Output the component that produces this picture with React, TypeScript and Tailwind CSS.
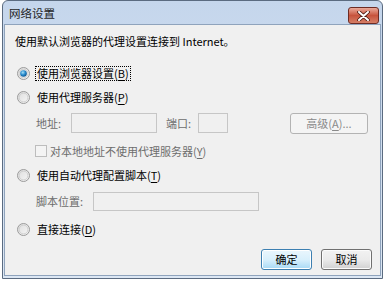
import React from "react"

const font = { fontFamily: '"Noto Sans CJK SC", "Noto Sans", sans-serif' }

function Radio({ checked }: { checked?: boolean }) {
  return (
    <svg width="13" height="13" viewBox="0 0 13 13" className="shrink-0">
      <defs>
        <linearGradient id="rb" x1="0" y1="0" x2="1" y2="1">
          <stop offset="0" stopColor="#dcdcdc" />
          <stop offset="1" stopColor="#f8f8f8" />
        </linearGradient>
        <radialGradient id="rd" cx="0.4" cy="0.35" r="0.7">
          <stop offset="0" stopColor="#a9e0f7" />
          <stop offset="0.5" stopColor="#2b8ecf" />
          <stop offset="1" stopColor="#0a4f8a" />
        </radialGradient>
      </defs>
      <circle cx="6.5" cy="6.5" r="6" fill="url(#rb)" stroke="#9a9a9a" strokeWidth="1" />
      <circle cx="6.5" cy="6.5" r="4.4" fill="none" stroke="#c8c8c8" strokeWidth="0.8" />
      {checked && <circle cx="6.5" cy="6.5" r="3.3" fill="url(#rd)" />}
    </svg>
  )
}

function Key({ k }: { k: string }) {
  return (
    <span>
      (<u className="underline-offset-2">{k}</u>)
    </span>
  )
}

export default function App() {
  return (
    <div className="w-[386px] h-[282px] bg-white relative overflow-hidden text-[11px] text-black" style={font}>
      <div className="ml-[2px] w-[381px] h-[279px] rounded-t-[6px] border border-[#5b6b80] bg-gradient-to-b from-[#c5d6ec] to-[#dce7f4] flex flex-col">
        {/* title bar */}
        <div className="h-[23px] flex items-center pl-[6px] pr-[3px] shrink-0">
          <span className="text-[11.5px] text-[#1e1e1e] mt-[2px]">网络设置</span>
          <div className="ml-auto mt-[6px] w-[31px] h-[17px] rounded-[3px] border border-[#6d2b24] bg-gradient-to-b from-[#e9a99a] via-[#c7533d] to-[#d57e66] flex items-center justify-center">
            <svg width="13" height="10" viewBox="0 0 13 10">
              <path d="M2 1 L11 9 M11 1 L2 9" stroke="#4a1a12" strokeWidth="3.6" strokeLinecap="round" />
              <path d="M2 1 L11 9 M11 1 L2 9" stroke="#ffffff" strokeWidth="2" strokeLinecap="round" />
            </svg>
          </div>
        </div>
        {/* client */}
        <div className="flex-1 mx-[1px] mb-[2px] border border-[#8fa3bc] bg-[#f0f0f0] flex flex-col pl-[10px] pr-[8px]">
          <div className="mt-[8px] h-[16px] flex items-center">使用默认浏览器的代理设置连接到 Internet。</div>

          <div className="mt-[16px] h-[16px] flex items-center gap-[5px] pl-[2px]">
            <Radio checked />
            <span className="border border-dotted border-black px-[1px] leading-[13px]">
              使用浏览器设置<Key k="B" />
            </span>
          </div>

          <div className="mt-[8px] h-[16px] flex items-center gap-[5px] pl-[2px]">
            <Radio />
            <span className="px-[2px]">
              使用代理服务器<Key k="P" />
            </span>
          </div>

          <div className="mt-[8px] h-[20px] flex items-center pl-[21px] text-[#6d6d6d]">
            <span className="w-[35px] shrink-0">地址:</span>
            <div className="w-[86px] h-[20px] border border-[#c6c6c6] bg-[#f0f0f0]" />
            <span className="ml-[9px] w-[32px] shrink-0">端口:</span>
            <div className="w-[30px] h-[20px] border border-[#c6c6c6] bg-[#f0f0f0]" />
            <div className="ml-[62px] w-[78px] h-[21px] rounded-[3px] border border-[#b3b3b3] bg-[#f4f4f4] flex items-center justify-center text-[#8a8a8a]">
              高级<Key k="A" />...
            </div>
          </div>

          <div className="mt-[11px] h-[14px] flex items-center pl-[20px] text-[#6d6d6d]">
            <div className="w-[12px] h-[12px] border border-[#bdbdbd] bg-[#f4f4f4]" />
            <span className="ml-[3px]">
              对本地地址不使用代理服务器<Key k="Y" />
            </span>
          </div>

          <div className="mt-[9px] h-[16px] flex items-center gap-[5px] pl-[2px]">
            <Radio />
            <span className="px-[2px]">
              使用自动代理配置脚本<Key k="T" />
            </span>
          </div>

          <div className="mt-[9px] h-[19px] flex items-center pl-[21px] text-[#6d6d6d]">
            <span className="w-[57px] shrink-0">脚本位置:</span>
            <div className="w-[166px] h-[19px] border border-[#c6c6c6] bg-[#f0f0f0]" />
          </div>

          <div className="mt-[10px] h-[16px] flex items-center gap-[5px] pl-[2px]">
            <Radio />
            <span className="px-[2px]">
              直接连接<Key k="D" />
            </span>
          </div>

          <div className="mt-[12px] flex justify-end gap-[9px] pr-[0px]">
            <div className="w-[51px] h-[21px] rounded-[3px] border border-[#3c7fb1] bg-gradient-to-b from-[#eaf6fd] via-[#d9f0fc] to-[#a7d9f5] flex items-center justify-center shadow-[inset_0_0_0_1px_#ffffff]">
              确定
            </div>
            <div className="w-[51px] h-[21px] rounded-[3px] border border-[#707070] bg-gradient-to-b from-[#f2f2f2] via-[#ebebeb] to-[#d1d1d1] flex items-center justify-center shadow-[inset_0_0_0_1px_#fbfbfb]">
              取消
            </div>
          </div>
        </div>
      </div>
    </div>
  )
}
